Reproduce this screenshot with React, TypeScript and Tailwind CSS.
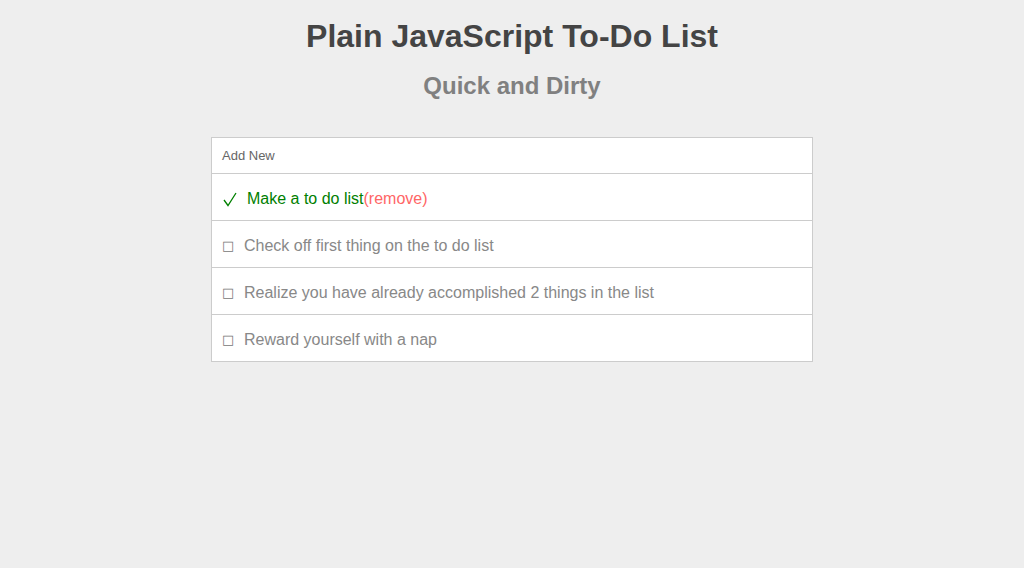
const items = [
  { text: "Make a to do list", done: true },
  { text: "Check off first thing on the to do list", done: false },
  { text: "Realize you have already accomplished 2 things in the list", done: false },
  { text: "Reward yourself with a nap", done: false },
];

const CheckMark = () => (
  <svg width="14" height="15" viewBox="0 0 14 15" className="mr-[10px]">
    <path d="M1 8 L5 13.5 L13 1" fill="none" stroke="#008000" strokeWidth="1.3" />
  </svg>
);

const App = () => {
  return (
    <div className="min-h-screen bg-[#eeeeee] font-['Liberation_Sans',Arial,sans-serif] pt-[18px]">
      <h1 className="text-center text-[32px] leading-[37px] font-bold text-[#444444]">
        Plain JavaScript To-Do List
      </h1>
      <h2 className="mt-[17px] text-center text-[24px] leading-[28px] font-bold text-[#808080]">
        Quick and Dirty
      </h2>
      <div className="mx-auto mt-[37px] w-[602px] border border-[#cccccc] bg-white">
        <div className="flex h-[36px] items-center border-b border-[#cccccc] pl-[10px] text-[13px] text-[#666666]">
          Add New
        </div>
        {items.map((item, i) => (
          <div
            key={`todo-${i}`}
            className={`flex items-center pl-[11px] pt-[4px] text-[16px] ${
              i < items.length - 1 ? "h-[47px] border-b border-[#cccccc]" : "h-[46px]"
            }`}
          >
            {item.done ? (
              <>
                <CheckMark />
                <span className="text-[#008000]">{item.text}</span>
                <span className="text-[#ff6666]">(remove)</span>
              </>
            ) : (
              <>
                <span className="w-[21px] -ml-[1px] pr-[1px] text-[13px] text-[#777777] font-['DejaVu_Sans',sans-serif]">
                  □
                </span>
                <span className="ml-[1px] text-[#888888]">{item.text}</span>
              </>
            )}
          </div>
        ))}
      </div>
    </div>
  );
};

export default App;
